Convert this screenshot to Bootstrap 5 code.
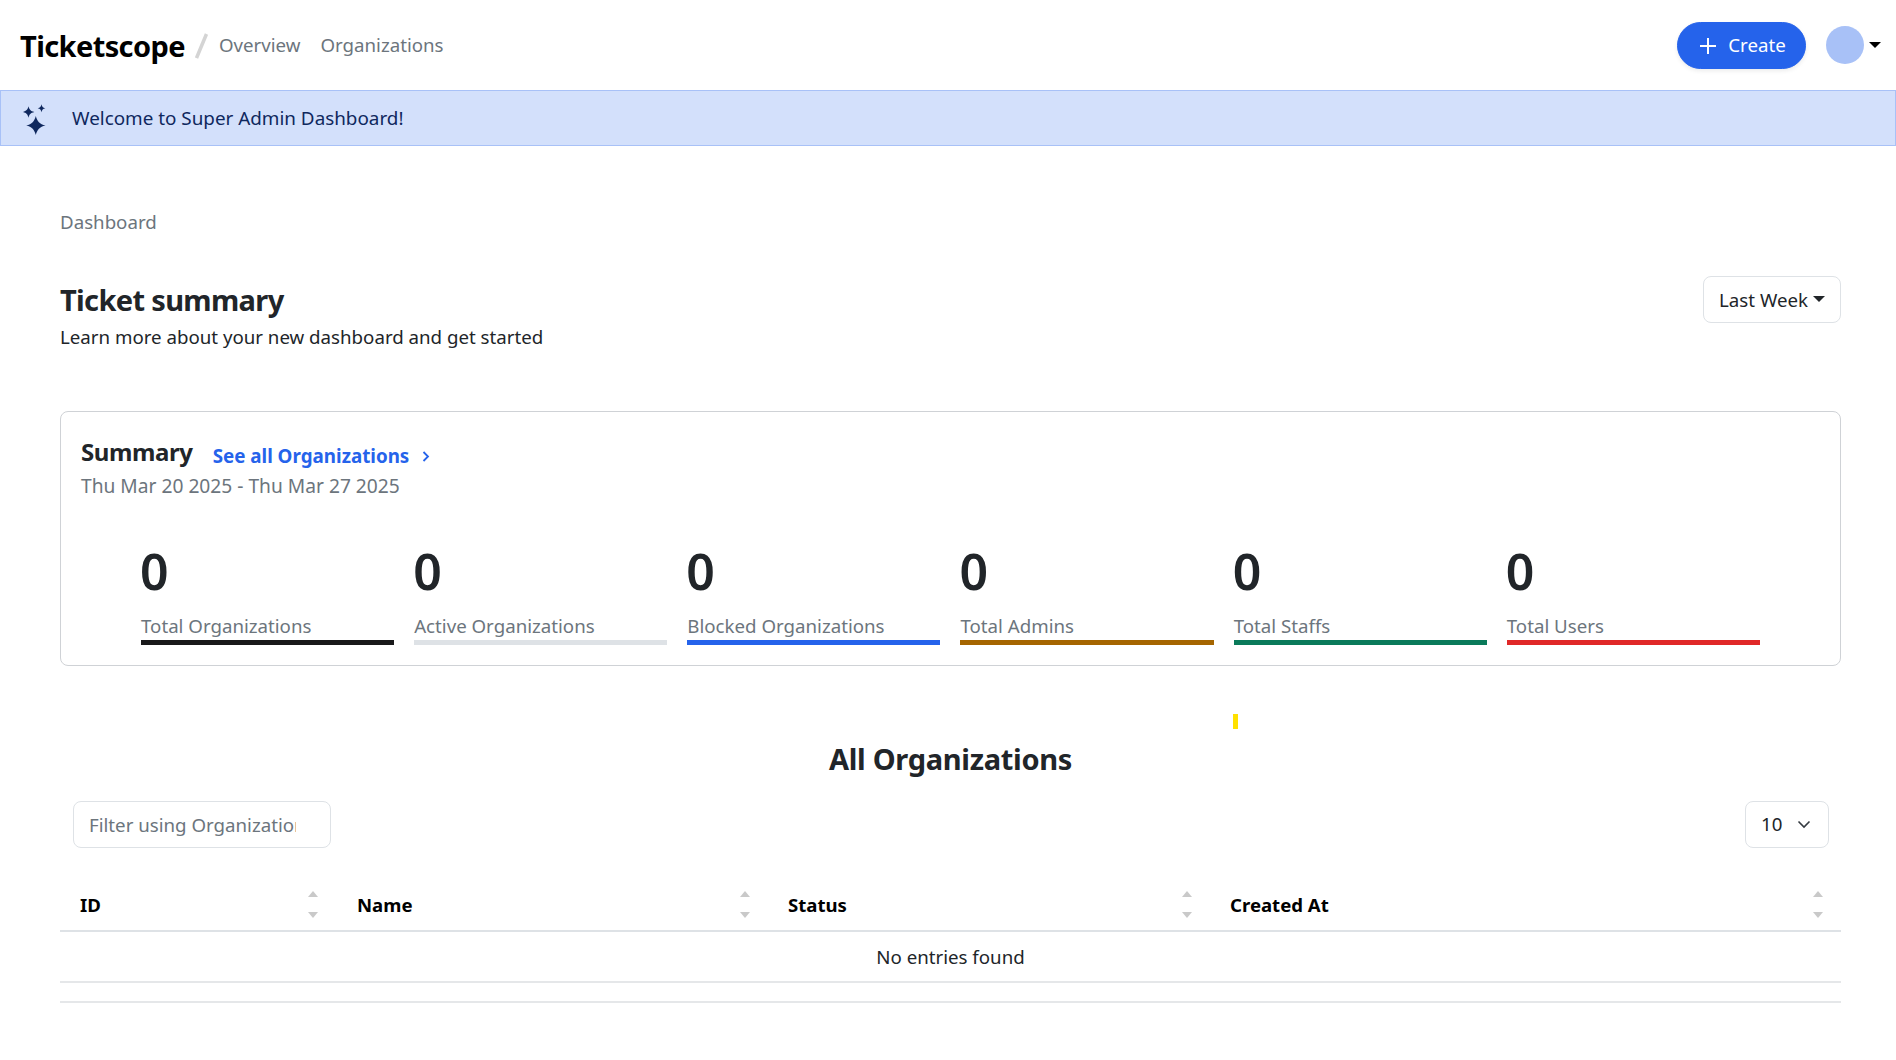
<!DOCTYPE html>
<html lang="en">
<head>
<meta charset="utf-8">
<title>Ticketscope</title>
<link href="https://cdn.jsdelivr.net/npm/bootstrap@5.3.0/dist/css/bootstrap.min.css" rel="stylesheet">
<style>
body{font-family:"Noto Sans","Open Sans",sans-serif;font-size:18.7px;color:#212529;background:#fff;min-height:1060px}
.top-bar{height:90px;padding:1px 15px 0 20px}
.brand-name{font-size:29px;font-weight:700;color:#000;letter-spacing:-.6px;text-decoration:none}
.brand-slash{width:13px;height:26px;margin:0 11px 0 10px}
.top-link{color:#6c757d;text-decoration:none;margin-right:20px}
.create-btn{--bs-btn-bg:#2563eb;--bs-btn-border-color:#2563eb;--bs-btn-hover-bg:#1f54c8;--bs-btn-hover-border-color:#1f54c8;width:129px;height:47px;border-radius:24px;font-size:18.7px;box-shadow:0 2px 4px rgba(0,0,0,.08);gap:12px}
.create-btn.p-0{padding-left:3px!important}
.avatar-dot{width:38px;height:38px;border-radius:50%;background:#a8c1f7}
.avatar-wrap{margin-left:20px;margin-top:-1px}
.caret-down{display:inline-block;border-top:6px solid #000;border-left:6px solid transparent;border-right:6px solid transparent;margin-left:5px;margin-top:-1px}
.caret-soft{border-top-color:#212529;margin-left:5px;margin-top:-3px}
.welcome-bar{height:56px;background:#d3e0fb;border:1px solid #a8c1f7;color:#0f285e;padding-left:22px;gap:25px;font-size:18.85px}
.page-body{padding:62px 55px 0 60px}
.crumb-text{color:#6c757d;line-height:27px}
.head-row{margin-top:41px}
.head-copy{padding-top:4px}
.head-title{font-size:29px;font-weight:700;line-height:39px;margin:0;letter-spacing:-.65px}
.head-sub{line-height:27px;margin:4px 0 0}
.week-btn{height:47px;width:138px;border:1px solid #dee2e6;border-radius:8px;background:#fff;color:#212529;font-size:18.7px;padding:2px 0 0}
.sum-card{margin-top:61px;height:255px;border:1px solid #cfd2d6;border-radius:8px;padding:24px 20px 0;--bs-card-bg:#fff}
.sum-title{font-size:24px;font-weight:700;line-height:32px;margin:0;color:#212529;letter-spacing:-.4px}
.sum-link{color:#2563eb;font-weight:700;text-decoration:none;font-size:18.8px;margin:4px 0 -4px 20px;line-height:27px;gap:13px}
.sum-date{color:#6c757d;line-height:27px;margin-top:4px;font-size:19.2px}
.stat-row{margin:42px 50px 0;--bs-gutter-x:20px}
.stat-num{font-size:50px;font-weight:600;line-height:60px;color:#212529;margin-left:-1px}
.stat-label{color:#6c757d;line-height:27px;margin-top:11px}
.stat-bar{height:5px;margin-top:1px}
.bar-ink{background:#19191a}.bar-grey{background:#dee2e6}.bar-blue{background:#2563eb}
.bar-amber{background:#a56500}.bar-green{background:#0a7a5a}.bar-red{background:#e02828}
.yellow-mark{width:5px;height:15px;background:#ffe100;margin:48px 0 0 1173px}
.all-title{font-size:29px;font-weight:700;line-height:39px;text-align:center;margin:10px 0 0;letter-spacing:-.3px}
.tools-row{margin-top:23px;padding:0 12px 0 13px}
.filter-box{width:258px;height:47px;border:1px solid #dee2e6;border-radius:8px;font-size:18.7px;padding:0 34px 0 15px;color:#6c757d;outline:0}
.filter-box::placeholder{color:#6c757d}
.size-box{width:84px;height:47px;border:1px solid #dee2e6;border-radius:8px;padding:0 17px 0 15px;font-size:18.7px}
.org-table{margin-top:25px;margin-bottom:0;--bs-table-border-color:#dee2e6;table-layout:fixed;width:100%}
.org-table th{height:58px;padding:7px 20px 0;font-size:18.6px;font-weight:700;color:#000;border-bottom:2px solid #dee2e6;vertical-align:middle}
.org-table td{height:51px;padding:2px 0 0;text-align:center;vertical-align:middle;color:#212529;border-bottom:2px solid #e5e7e9}
.col-id{width:277px}.col-name{width:431px}.col-status{width:442px}
.sort-pair{gap:15px;margin-right:-1px}
.org-table th:not(:first-child) .sort-pair{margin-right:-2px}
.sort-up{border-bottom:6px solid #c9c9c9;border-left:5px solid transparent;border-right:5px solid transparent}
.sort-down{border-top:6px solid #c9c9c9;border-left:5px solid transparent;border-right:5px solid transparent}
.foot-rule{height:2px;background:#e5e7e9;margin-top:18px}
</style>
</head>
<body>
<header class="top-bar d-flex align-items-center justify-content-between">
  <div class="d-flex align-items-center">
    <a class="brand-name" href="#">Ticketscope</a>
    <svg class="brand-slash" viewBox="0 0 13 26"><path d="M11.5 1 1.500 25" stroke="#d4d4d4" stroke-width="3.500" fill="none"/></svg>
    <a class="top-link" href="#">Overview</a>
    <a class="top-link" href="#">Organizations</a>
  </div>
  <div class="d-flex align-items-center">
    <button class="btn btn-primary create-btn d-flex align-items-center justify-content-center p-0" type="button">
      <svg width="16" height="16" viewBox="0 0 16 16"><path d="M8 0v16M0 8h16" stroke="#fff" stroke-width="2"/></svg>
      <span>Create</span>
    </button>
    <div class="avatar-wrap d-flex align-items-center"><span class="avatar-dot"></span><span class="caret-down"></span></div>
  </div>
</header>
<div class="welcome-bar d-flex align-items-center">
  <svg width="24" height="34" viewBox="0 0 24 34" fill="#0f285e"><path d="M12.800 15C14.300 20.500 16.500 23 22.500 24.500 16.500 26 14.300 28.500 12.800 34 11.300 28.500 9.200 26 3.200 24.500 9.200 23 11.300 20.500 12.800 15Z"/><path d="M5.500 5.300C6.400 8.800 7.600 10 11.300 11 7.600 12 6.400 13.200 5.500 16.700 4.600 13.200 3.400 12 -.2 11 3.400 10 4.600 8.800 5.500 5.300Z"/><path d="M18.500 3.200C19 5.600 19.800 6.500 22.300 7.200 19.800 7.900 19 8.800 18.500 11.200 18 8.800 17.200 7.900 14.700 7.200 17.200 6.500 18 5.600 18.500 3.200Z"/></svg>
  <span>Welcome to Super Admin Dashboard!</span>
</div>
<main class="page-body">
  <div class="crumb-text">Dashboard</div>
  <div class="head-row d-flex justify-content-between align-items-start">
    <div class="head-copy">
      <h1 class="head-title">Ticket summary</h1>
      <p class="head-sub">Learn more about your new dashboard and get started</p>
    </div>
    <button class="week-btn d-flex align-items-center justify-content-center" type="button">Last Week<span class="caret-down caret-soft"></span></button>
  </div>
  <section class="card sum-card">
    <div class="d-flex align-items-center">
      <h2 class="sum-title">Summary</h2>
      <a class="sum-link d-inline-flex align-items-center" href="#">See all Organizations
        <svg width="8" height="11" viewBox="0 0 8 11"><path d="M1.500 1 6 5.500 1.500 10" stroke="#2563eb" stroke-width="1.800" fill="none"/></svg>
      </a>
    </div>
    <div class="sum-date">Thu Mar 20 2025 - Thu Mar 27 2025</div>
    <div class="row stat-row">
      <div class="col-2"><div class="stat-num">0</div><div class="stat-label">Total Organizations</div><div class="stat-bar bar-ink"></div></div>
      <div class="col-2"><div class="stat-num">0</div><div class="stat-label">Active Organizations</div><div class="stat-bar bar-grey"></div></div>
      <div class="col-2"><div class="stat-num">0</div><div class="stat-label">Blocked Organizations</div><div class="stat-bar bar-blue"></div></div>
      <div class="col-2"><div class="stat-num">0</div><div class="stat-label">Total Admins</div><div class="stat-bar bar-amber"></div></div>
      <div class="col-2"><div class="stat-num">0</div><div class="stat-label">Total Staffs</div><div class="stat-bar bar-green"></div></div>
      <div class="col-2"><div class="stat-num">0</div><div class="stat-label">Total Users</div><div class="stat-bar bar-red"></div></div>
    </div>
  </section>
  <div class="yellow-mark"></div>
  <h2 class="all-title">All Organizations</h2>
  <div class="tools-row d-flex justify-content-between">
    <input class="filter-box" type="text" placeholder="Filter using Organization name">
    <div class="size-box d-flex align-items-center justify-content-between"><span>10</span>
      <svg width="14" height="9" viewBox="0 0 14 9"><path d="M1.500 1.500 7 7l5.500-5.500" stroke="#343a40" stroke-width="1.600" fill="none"/></svg>
    </div>
  </div>
  <table class="table org-table">
    <colgroup><col class="col-id"><col class="col-name"><col class="col-status"><col></colgroup>
    <thead><tr>
      <th><div class="d-flex justify-content-between align-items-center"><span>ID</span><span class="sort-pair d-flex flex-column"><span class="sort-up"></span><span class="sort-down"></span></span></div></th>
      <th><div class="d-flex justify-content-between align-items-center"><span>Name</span><span class="sort-pair d-flex flex-column"><span class="sort-up"></span><span class="sort-down"></span></span></div></th>
      <th><div class="d-flex justify-content-between align-items-center"><span>Status</span><span class="sort-pair d-flex flex-column"><span class="sort-up"></span><span class="sort-down"></span></span></div></th>
      <th><div class="d-flex justify-content-between align-items-center"><span>Created At</span><span class="sort-pair d-flex flex-column"><span class="sort-up"></span><span class="sort-down"></span></span></div></th>
    </tr></thead>
    <tbody><tr><td colspan="4">No entries found</td></tr></tbody>
  </table>
  <div class="foot-rule"></div>
</main>
<script src="https://cdn.jsdelivr.net/npm/bootstrap@5.3.0/dist/js/bootstrap.bundle.min.js"></script>
</body>
</html>
